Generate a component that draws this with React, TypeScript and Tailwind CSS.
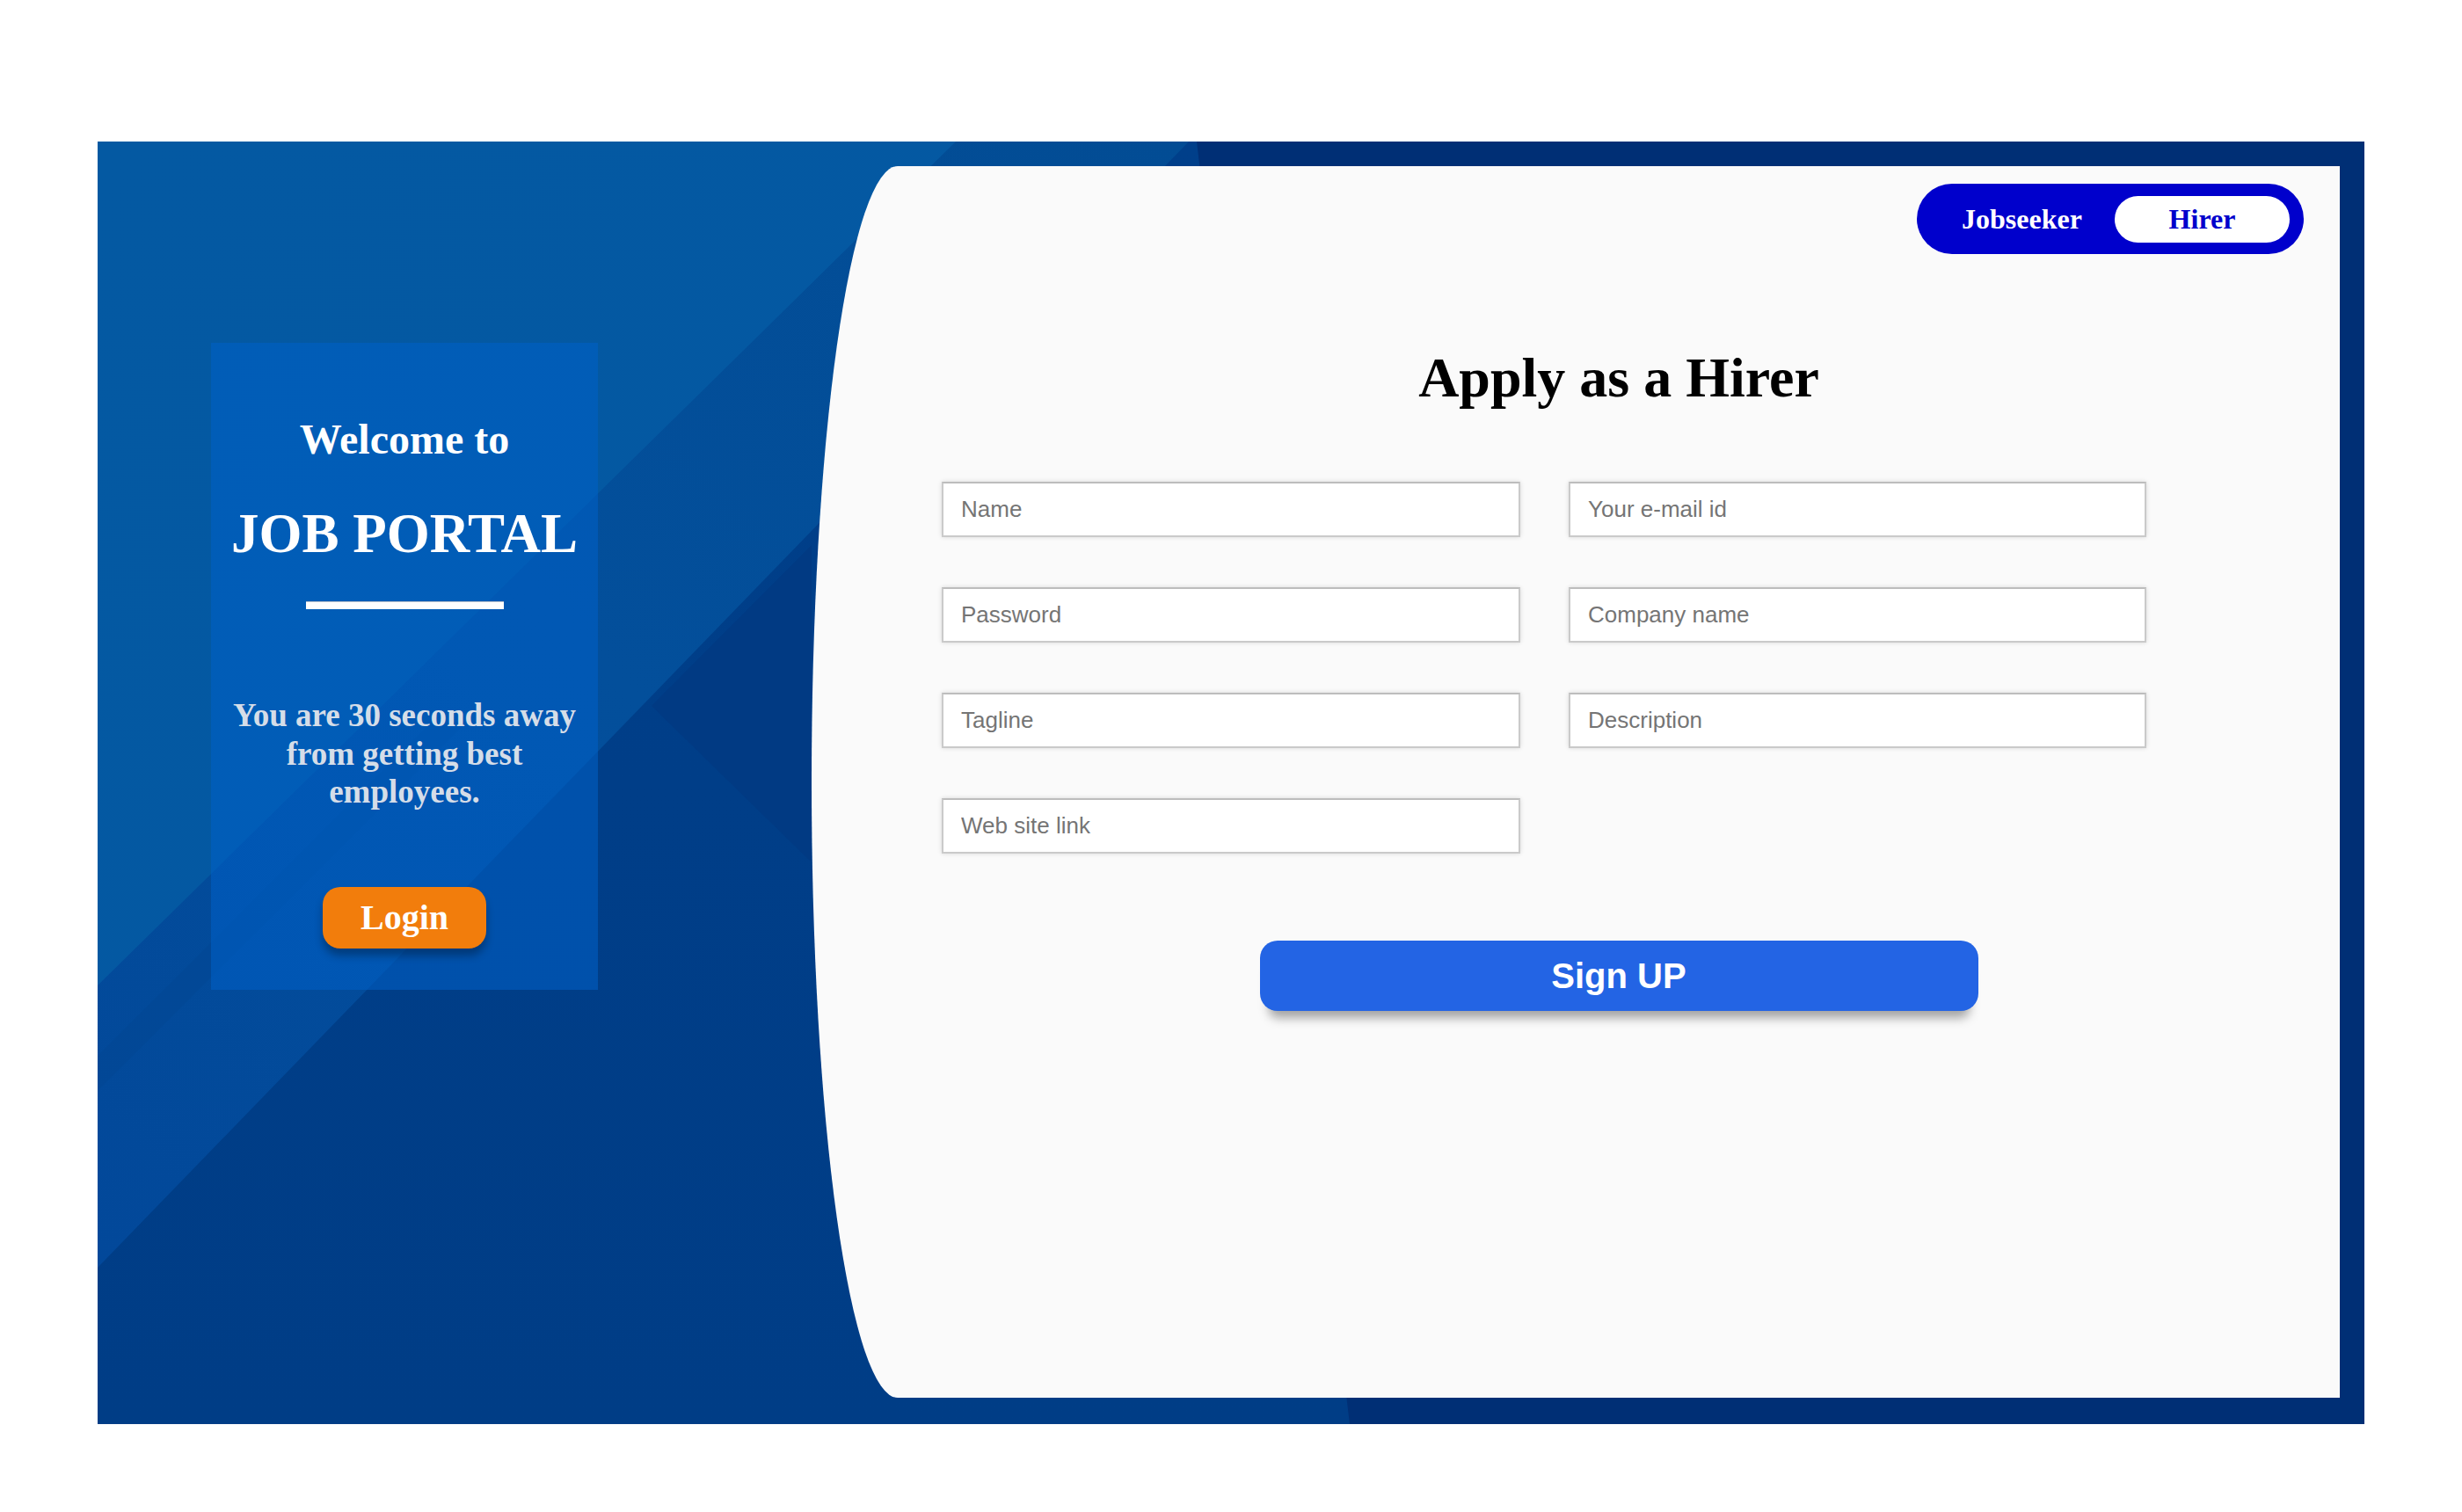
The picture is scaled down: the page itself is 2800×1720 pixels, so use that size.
import React from "react";

const serif = "font-['Liberation_Serif',serif]";
const sans = "font-['Liberation_Sans',Arial,sans-serif]";

function Background() {
  return (
    <svg
      className="absolute inset-0 h-full w-full"
      viewBox="0 0 2578 1459"
      preserveAspectRatio="none"
    >
      <defs>
        <linearGradient id="bandB" x1="0" y1="1" x2="1" y2="0">
          <stop offset="0" stopColor="#02489a" />
          <stop offset="0.5" stopColor="#034f9b" />
          <stop offset="1" stopColor="#024c94" />
        </linearGradient>
        <linearGradient id="regionA" x1="0" y1="0" x2="1" y2="1">
          <stop offset="0" stopColor="#0459a2" />
          <stop offset="1" stopColor="#0458a2" />
        </linearGradient>
        <linearGradient id="regionC" x1="0" y1="0" x2="0" y2="1">
          <stop offset="0" stopColor="#003f8a" />
          <stop offset="1" stopColor="#003d86" />
        </linearGradient>
      </defs>
      <rect x="0" y="0" width="2578" height="1459" fill="url(#regionC)" />
      <polygon points="0,0 1241,0 0,1281" fill="url(#bandB)" />
      <polygon points="0,0 976,0 0,960" fill="url(#regionA)" />
      <polygon points="630,642 812,459 812,820" fill="#013a82" opacity="0.8" />
      <polygon points="0,1040 380,660 420,660 0,1080" fill="#02458f" opacity="0.35" />
      <polygon points="1250,0 2578,0 2578,1459 1424,1459" fill="#002f75" />
    </svg>
  );
}

function Field({ placeholder }: { placeholder: string }) {
  return (
    <input
      type="text"
      placeholder={placeholder}
      className={`h-[63px] w-full bg-white border-2 border-[#cacaca] border-t-[#bdbdbd] shadow-[0_0_5px_rgba(0,0,0,0.14)] px-[20px] text-[26px] text-[#333] placeholder:text-[#757575] outline-none ${sans}`}
    />
  );
}

export default function App() {
  return (
    <div className="min-h-[1720px] w-full bg-white pt-[161px] pl-[111px]">
      <div className="relative flex h-[1459px] w-[2578px] overflow-hidden">
        <Background />

        {/* Left section */}
        <div className="relative z-10 w-[812px] shrink-0 pl-[129px] pt-[229px]">
          <div className="flex h-[736px] w-[440px] flex-col items-center bg-[rgba(0,96,200,0.55)] pt-[86px]">
            <div className={`${serif} text-[48px] font-bold leading-[48px] text-white`}>
              Welcome to
            </div>
            <div className={`${serif} mt-[52px] whitespace-nowrap text-[63px] font-bold leading-[63px] text-white`}>
              JOB PORTAL
            </div>
            <div className="mt-[45px] h-[9px] w-[225px] border-t border-[#b8c0cc] bg-white" />
            <div className={`${serif} mt-[99px] text-center text-[37px] font-bold leading-[43.5px] text-[#d5dde8]`}>
              You are 30 seconds away
              <br />
              from getting best
              <br />
              employees.
            </div>
            <button
              className={`${serif} mt-[86px] h-[70px] w-[186px] rounded-[20px] bg-[#f27d0c] text-[40px] font-bold leading-none text-white shadow-[0_8px_10px_rgba(0,0,0,0.3)]`}
            >
              Login
            </button>
          </div>
        </div>

        {/* Right panel */}
        <div className="relative z-10 mb-[30px] mr-[28px] mt-[28px] flex flex-1 flex-col rounded-tl-[98px_700px] rounded-bl-[98px_700px] bg-[#fafafa] pl-[98px]">
          <div className="flex justify-end pr-[41px] pt-[20px]">
            <div className="flex h-[80px] w-[440px] items-center rounded-full bg-[#0000cc] pl-[14px] pr-[16px]">
              <div className={`${serif} flex-1 text-center text-[32px] font-bold text-white`}>
                Jobseeker
              </div>
              <div className={`${serif} flex h-[53px] w-[199px] items-center justify-center rounded-full bg-white text-[32px] font-bold text-[#0000cc]`}>
                Hirer
              </div>
            </div>
          </div>

          <h1 className={`${serif} mt-[109px] text-center text-[64px] font-bold leading-[64px] text-black`}>
            Apply as a Hirer
          </h1>

          <div className="ml-[50px] mt-[86px] grid grid-cols-[658px_657px] gap-x-[55px] gap-y-[57px]">
            <Field placeholder="Name" />
            <Field placeholder="Your e-mail id" />
            <Field placeholder="Password" />
            <Field placeholder="Company name" />
            <Field placeholder="Tagline" />
            <Field placeholder="Description" />
            <Field placeholder="Web site link" />
          </div>

          <button
            className={`${sans} mt-[99px] h-[80px] w-[817px] self-center rounded-[20px] bg-[#2364e4] text-[40px] font-bold text-white shadow-[0_18px_12px_-10px_rgba(0,0,0,0.35)]`}
          >
            Sign UP
          </button>
        </div>
      </div>
    </div>
  );
}
